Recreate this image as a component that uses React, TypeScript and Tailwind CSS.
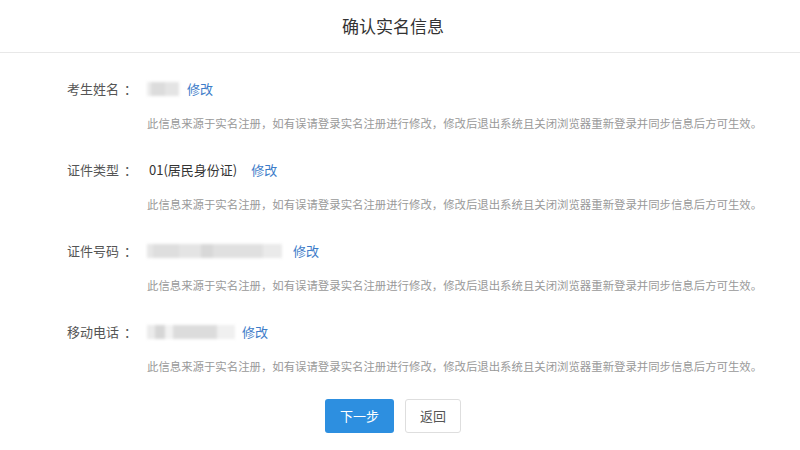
import React from "react";

const note =
  "此信息来源于实名注册，如有误请登录实名注册进行修改，修改后退出系统且关闭浏览器重新登录并同步信息后方可生效。";

function Blurred({ widths }: { widths: { w: string; c: string }[] }) {
  return (
    <div className="flex h-[14px] blur-[1.5px]">
      {widths.map((b, i) => (
        <div key={i} className={`${b.w} ${b.c} h-full`} />
      ))}
    </div>
  );
}

function Row({
  label,
  value,
  gap,
}: {
  label: string;
  value: React.ReactNode;
  gap: string;
}) {
  return (
    <div className="flex flex-col">
      <div className="flex h-5 items-center">
        <span className="w-[80px] shrink-0 text-[13px] text-[#555]">
          {label}
          <span className="ml-[5px]">：</span>
        </span>
        <div className="flex items-center">
          {value}
          <a className={`${gap} text-[13px] text-[#3d7cc9] cursor-pointer`}>修改</a>
        </div>
      </div>
      <p className="mt-4 h-4 pl-[80px] text-[11.4px] leading-4 text-[#999] whitespace-nowrap">
        {note}
      </p>
    </div>
  );
}

export default function App() {
  return (
    <div
      className="min-h-[450px] w-[800px] bg-white"
      style={{ fontFamily: '"Microsoft YaHei", "Noto Sans CJK SC", sans-serif' }}
    >
      <div className="flex h-[53px] items-center justify-center border-b border-[#e8e8e8] pr-[14px]">
        <h1 className="text-[17px] text-[#333]">确认实名信息</h1>
      </div>

      <div className="flex flex-col gap-[29px] pl-[67px] pt-[26px]">
        <Row
          label="考生姓名"
          gap="ml-[8px]"
          value={
            <Blurred
              widths={[
                { w: "w-[4px]", c: "bg-[#ececec]" },
                { w: "w-[14px]", c: "bg-[#dcdcdc]" },
                { w: "w-[14px]", c: "bg-[#e4e4e4]" },
              ]}
            />
          }
        />
        <Row
          label="证件类型"
          gap="ml-[14px]"
          value={<span className="pl-[2px] text-[13px] text-[#333]">01(居民身份证)</span>}
        />
        <Row
          label="证件号码"
          gap="ml-[11px]"
          value={
            <Blurred
              widths={[
                { w: "w-[6px]", c: "bg-[#e6e6e6]" },
                { w: "w-[26px]", c: "bg-[#dedede]" },
                { w: "w-[22px]", c: "bg-[#e4e4e4]" },
                { w: "w-[12px]", c: "bg-[#d8d8d8]" },
                { w: "w-[50px]", c: "bg-[#e0e0e0]" },
                { w: "w-[19px]", c: "bg-[#eaeaea]" },
              ]}
            />
          }
        />
        <Row
          label="移动电话"
          gap="ml-[7px]"
          value={
            <Blurred
              widths={[
                { w: "w-[8px]", c: "bg-[#ebebeb]" },
                { w: "w-[10px]", c: "bg-[#d6d6d6]" },
                { w: "w-[8px]", c: "bg-[#f2f2f2]" },
                { w: "w-[44px]", c: "bg-[#dcdcdc]" },
                { w: "w-[18px]", c: "bg-[#f0f0f0]" },
              ]}
            />
          }
        />
      </div>

      <div className="mt-[25px] flex gap-[11px] pl-[325px]">
        <button className="h-[34px] w-[69px] rounded-[3px] bg-[#2d8fe0] text-[13px] text-white">
          下一步
        </button>
        <button className="h-[34px] w-[56px] rounded-[3px] border border-[#dedede] bg-white text-[13px] text-[#555]">
          返回
        </button>
      </div>
    </div>
  );
}
